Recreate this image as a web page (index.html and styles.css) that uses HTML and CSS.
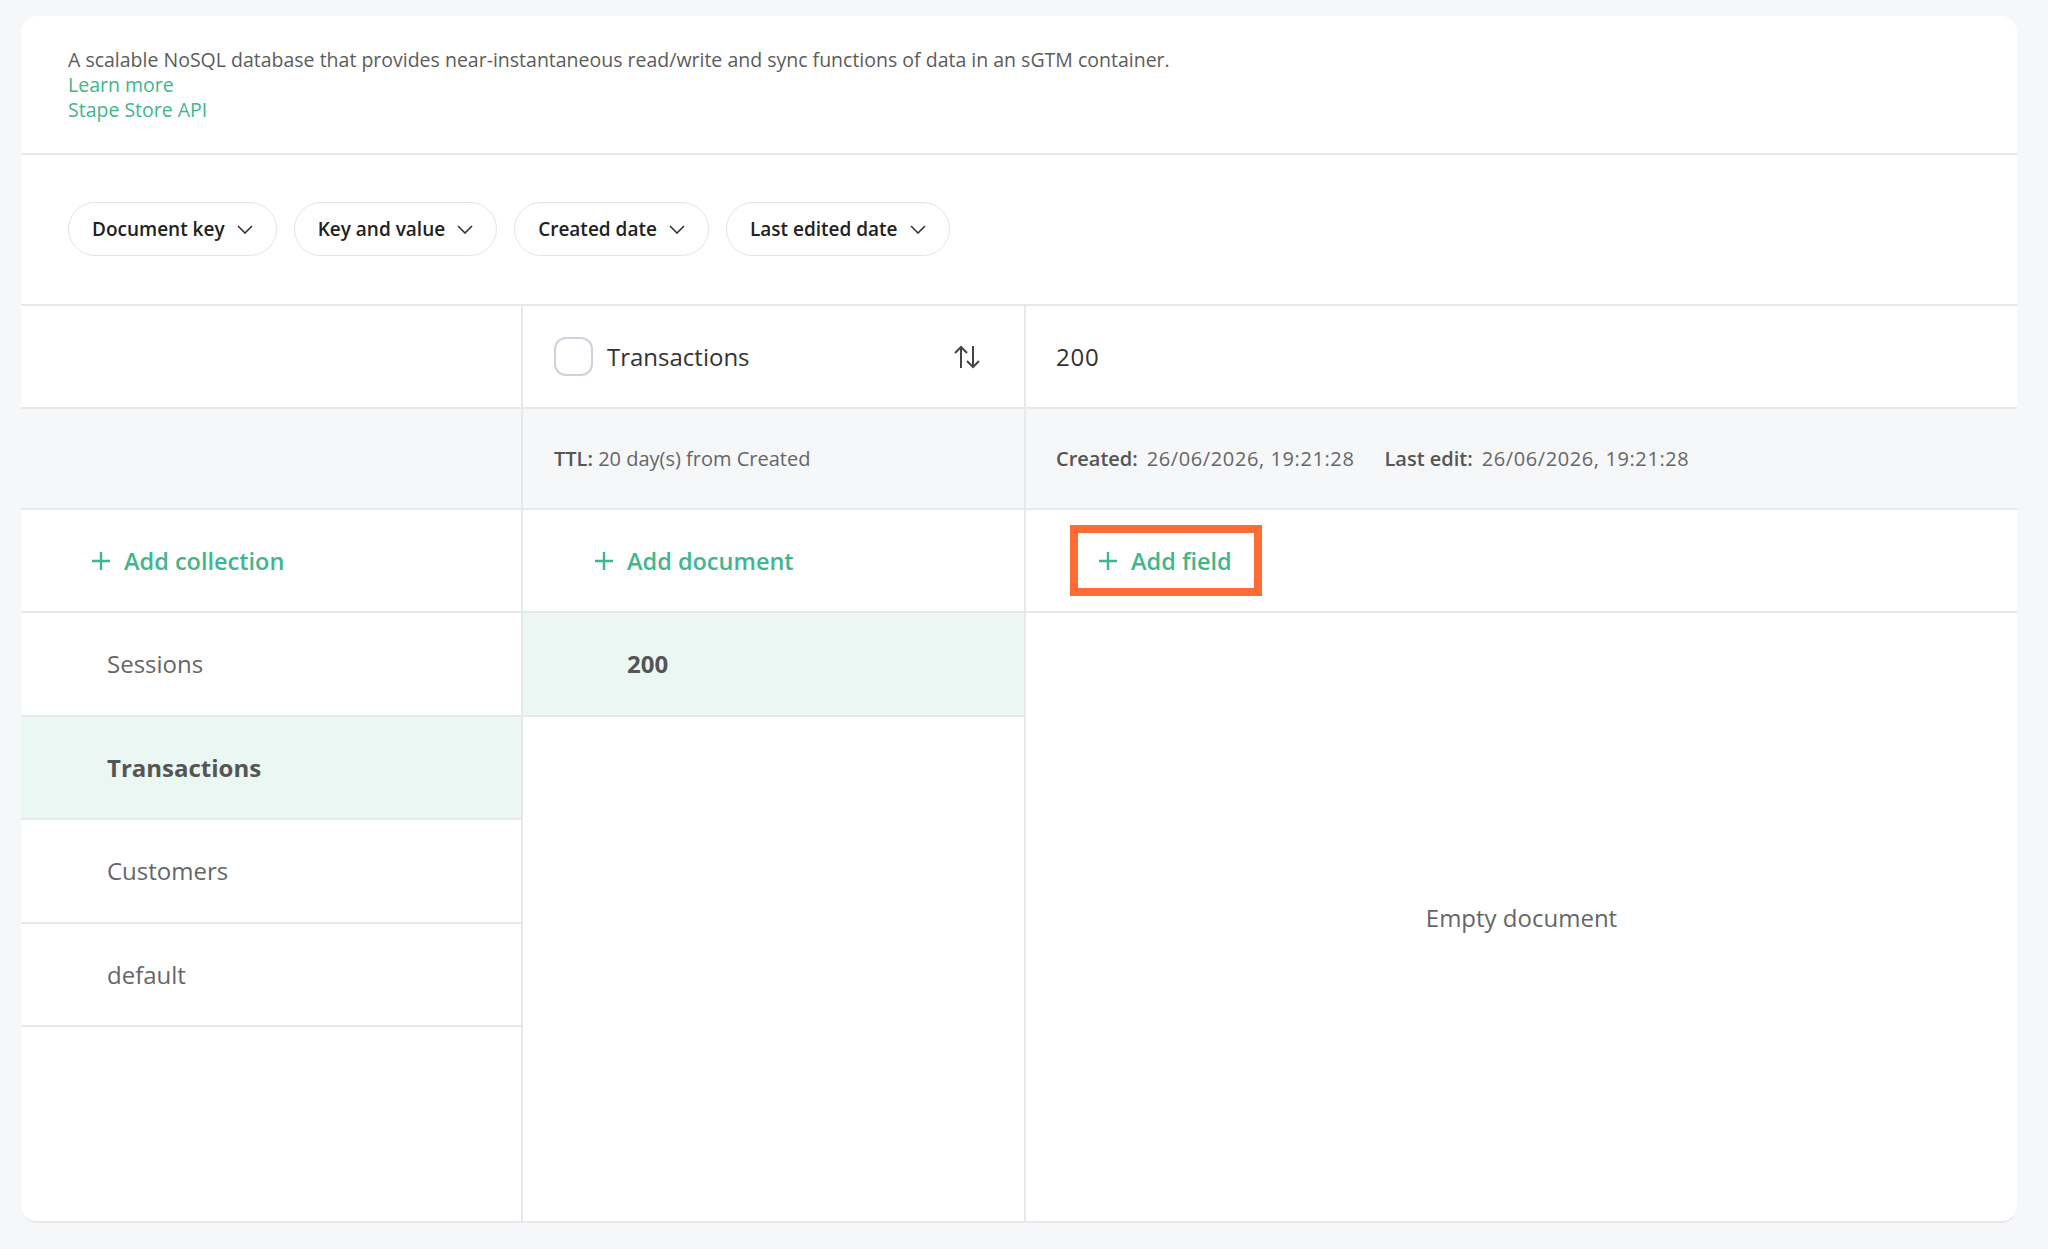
FILE: index.html
```html
<!DOCTYPE html>
<html lang="en">
<head>
  <meta charset="UTF-8" />
  <title>Stape Store</title>
  <link rel="stylesheet" href="styles.css">
</head>
<body>
  <div class="card">
    <section class="intro">
      <p>A scalable NoSQL database that provides near-instantaneous read/write and sync functions of data in an sGTM container.</p>
      <a href="#">Learn more</a>
      <a href="#">Stape Store API</a>
    </section>

    <section class="filters">
      <button class="filter">Document key <svg width="16" height="9" viewBox="0 0 16 9"><path d="M1 1l7 7 7-7" fill="none" stroke="#333" stroke-width="1.6"/></svg></button>
      <button class="filter">Key and value <svg width="16" height="9" viewBox="0 0 16 9"><path d="M1 1l7 7 7-7" fill="none" stroke="#333" stroke-width="1.6"/></svg></button>
      <button class="filter">Created date <svg width="16" height="9" viewBox="0 0 16 9"><path d="M1 1l7 7 7-7" fill="none" stroke="#333" stroke-width="1.6"/></svg></button>
      <button class="filter">Last edited date <svg width="16" height="9" viewBox="0 0 16 9"><path d="M1 1l7 7 7-7" fill="none" stroke="#333" stroke-width="1.6"/></svg></button>
    </section>

    <div class="row head-row">
      <div class="cell"></div>
      <div class="cell doc-head">
        <span class="checkbox"></span>
        <span class="coll-name">Transactions</span>
        <svg class="sort" width="28" height="26" viewBox="0 0 28 26"><path d="M8 24V3M2 9l6-6 6 6M20 2v21M14 17l6 6 6-6" fill="none" stroke="#444" stroke-width="2"/></svg>
      </div>
      <div class="cell field-head">200</div>
    </div>

    <div class="row meta-row">
      <div class="cell"></div>
      <div class="cell meta"><span><b>TTL:</b> 20 day(s) from Created</span></div>
      <div class="cell meta">
        <b>Created:</b><span class="val">26/06/2026, 19:21:28</span><b class="gap">Last edit:</b><span class="val">26/06/2026, 19:21:28</span>
      </div>
    </div>

    <div class="row add-row">
      <div class="cell"><a class="add add-coll" href="#"><svg width="20" height="20" viewBox="0 0 20 20"><path d="M10 1v18M1 10h18" stroke="#3fb68b" stroke-width="2.4"/></svg>Add collection</a></div>
      <div class="cell"><a class="add add-doc" href="#"><svg width="20" height="20" viewBox="0 0 20 20"><path d="M10 1v18M1 10h18" stroke="#3fb68b" stroke-width="2.4"/></svg>Add document</a></div>
      <div class="cell"><a class="add add-field" href="#"><svg width="20" height="20" viewBox="0 0 20 20"><path d="M10 1v18M1 10h18" stroke="#3fb68b" stroke-width="2.4"/></svg>Add field</a></div>
    </div>

    <div class="row body-row">
      <ul class="list collections">
        <li>Sessions</li>
        <li class="active">Transactions</li>
        <li>Customers</li>
        <li>default</li>
      </ul>
      <ul class="list documents">
        <li class="active">200</li>
      </ul>
      <div class="empty">Empty document</div>
    </div>
  </div>
</body>
</html>
```

FILE: styles.css
```css
body {
  font-family: "Open Sans", "Liberation Sans", sans-serif;
  background-color: #f6f7f9;
  margin: 0;
  padding: 16px 31px 26px 21px;
}

.card {
  background: white;
  border-radius: 16px;
  border-bottom: 2px solid #e6e8eb;
}

.intro {
  padding: 31px 47px 31px;
  border-bottom: 2px solid #e6e8eb;
  font-size: 19.5px;
  line-height: 25px;
}

.intro p {
  margin: 0;
  color: #5c5c5c;
}

.intro a {
  display: block;
  color: #3fb68b;
  text-decoration: none;
}

.filters {
  display: flex;
  gap: 17px;
  padding: 47px 47px 48px;
  border-bottom: 2px solid #e6e8eb;
}

.filter {
  display: flex;
  align-items: center;
  gap: 12px;
  height: 54px;
  padding: 0 23px;
  background: white;
  border: 1.5px solid #e2e4e8;
  border-radius: 27px;
  font-family: inherit;
  font-size: 19px;
  font-weight: 600;
  color: #222;
}

.row {
  display: grid;
  grid-template-columns: 500px 503px 1fr;
  border-bottom: 2px solid #e6e8eb;
}

.row .cell + .cell,
.body-row > * + * {
  border-left: 2px solid #e6e8eb;
}

.cell {
  display: flex;
  align-items: center;
  padding: 0 31px;
}

.cell:last-child {
  padding: 0 30px;
}

.head-row {
  height: 101px;
}

.checkbox {
  width: 35px;
  height: 35px;
  border: 2px solid #cdd3dc;
  border-radius: 12px;
  margin-right: 14px;
}

.coll-name {
  flex: 1;
  font-size: 24px;
  color: #333;
}

.sort {
  margin-right: 12px;
}

.field-head {
  font-size: 24px;
  letter-spacing: 0.8px;
  color: #333;
}

.meta-row {
  height: 99px;
  background: #f6f7f9;
}

.meta {
  font-size: 20px;
  color: #666;
}

.meta b {
  font-weight: 600;
  color: #555;
}

.meta .val {
  margin-left: 9px;
  letter-spacing: 0.6px;
}

.meta b.gap {
  margin-left: 30px;
}

.add-row {
  height: 101px;
}

.add {
  display: flex;
  align-items: center;
  gap: 13px;
  font-size: 23.5px;
  font-weight: 600;
  color: #3fb68b;
  text-decoration: none;
}

.add-coll {
  margin-left: 39px;
}

.add-doc {
  margin-left: 40px;
}

.add-field {
  margin-left: 14px;
  height: 55px;
  padding: 0 22px 0 20px;
  border: 8px solid #ff6b35;
}

.body-row {
  height: 608px;
  border-bottom: none;
}

.list {
  list-style: none;
  margin: 0;
  padding: 0;
}

.list li {
  height: 101.5px;
  display: flex;
  align-items: center;
  border-bottom: 2px solid #e6e8eb;
  font-size: 24px;
  color: #666;
}

.collections li {
  padding-left: 86px;
}

.documents li {
  padding-left: 104px;
}

.list li.active {
  background: #eaf7f2;
  font-weight: 700;
  color: #555;
}

.empty {
  display: flex;
  align-items: center;
  justify-content: center;
  font-size: 24px;
  color: #666;
}
```
